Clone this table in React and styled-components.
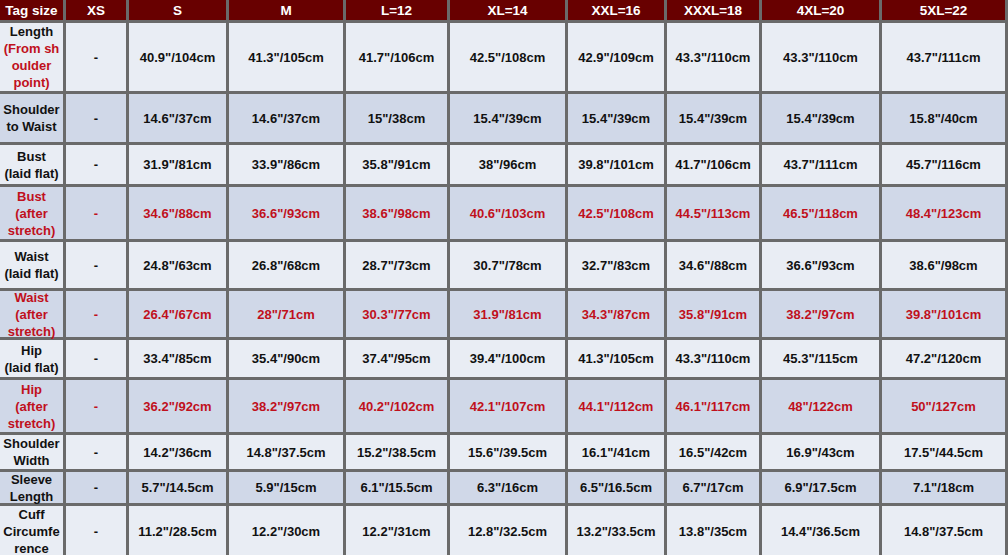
import styled, { createGlobalStyle } from "styled-components";

const GlobalStyle = createGlobalStyle`
  html, body {
    margin: 0;
    padding: 0;
    overflow: hidden;
    background: #ffffff;
  }
`

const columns = [63, 60, 97, 114, 101, 115, 96, 92, 117, 123]
const rowHeights = [20, 68, 48, 39, 52, 46, 46, 37, 52, 34, 31, 50]

const header = ["Tag size", "XS", "S", "M", "L=12", "XL=14", "XXL=16", "XXXL=18", "4XL=20", "5XL=22"]

const rows = [
  {
    label: [["Length", false], ["(From sh", true], ["oulder", true], ["point)", true]],
    values: ['40.9"/104cm', '41.3"/105cm', '41.7"/106cm', '42.5"/108cm', '42.9"/109cm', '43.3"/110cm', '43.3"/110cm', '43.7"/111cm'],
  },
  {
    label: [["Shoulder"], ["to Waist"]],
    values: ['14.6"/37cm', '14.6"/37cm', '15"/38cm', '15.4"/39cm', '15.4"/39cm', '15.4"/39cm', '15.4"/39cm', '15.8"/40cm'],
  },
  {
    label: [["Bust"], ["(laid flat)"]],
    values: ['31.9"/81cm', '33.9"/86cm', '35.8"/91cm', '38"/96cm', '39.8"/101cm', '41.7"/106cm', '43.7"/111cm', '45.7"/116cm'],
  },
  {
    red: true,
    label: [["Bust"], ["(after"], ["stretch)"]],
    values: ['34.6"/88cm', '36.6"/93cm', '38.6"/98cm', '40.6"/103cm', '42.5"/108cm', '44.5"/113cm', '46.5"/118cm', '48.4"/123cm'],
  },
  {
    label: [["Waist"], ["(laid flat)"]],
    values: ['24.8"/63cm', '26.8"/68cm', '28.7"/73cm', '30.7"/78cm', '32.7"/83cm', '34.6"/88cm', '36.6"/93cm', '38.6"/98cm'],
  },
  {
    red: true,
    label: [["Waist"], ["(after"], ["stretch)"]],
    values: ['26.4"/67cm', '28"/71cm', '30.3"/77cm', '31.9"/81cm', '34.3"/87cm', '35.8"/91cm', '38.2"/97cm', '39.8"/101cm'],
  },
  {
    label: [["Hip"], ["(laid flat)"]],
    values: ['33.4"/85cm', '35.4"/90cm', '37.4"/95cm', '39.4"/100cm', '41.3"/105cm', '43.3"/110cm', '45.3"/115cm', '47.2"/120cm'],
  },
  {
    red: true,
    label: [["Hip"], ["(after"], ["stretch)"]],
    values: ['36.2"/92cm', '38.2"/97cm', '40.2"/102cm', '42.1"/107cm', '44.1"/112cm', '46.1"/117cm', '48"/122cm', '50"/127cm'],
  },
  {
    label: [["Shoulder"], ["Width"]],
    values: ['14.2"/36cm', '14.8"/37.5cm', '15.2"/38.5cm', '15.6"/39.5cm', '16.1"/41cm', '16.5"/42cm', '16.9"/43cm', '17.5"/44.5cm'],
  },
  {
    label: [["Sleeve"], ["Length"]],
    values: ['5.7"/14.5cm', '5.9"/15cm', '6.1"/15.5cm', '6.3"/16cm', '6.5"/16.5cm', '6.7"/17cm', '6.9"/17.5cm', '7.1"/18cm'],
  },
  {
    label: [["Cuff"], ["Circumfe"], ["rence"]],
    values: ['11.2"/28.5cm', '12.2"/30cm', '12.2"/31cm', '12.8"/32.5cm', '13.2"/33.5cm', '13.8"/35cm', '14.4"/36.5cm', '14.8"/37.5cm'],
  },
]

const App = () => {
  return (
    <>
      <GlobalStyle />
      <StyledTable>
        {header.map((h) => (
          <StyledHeadCell key={h}>{h}</StyledHeadCell>
        ))}
        {rows.map((row, i) => {
          const alt = i % 2 === 1
          return [
            <StyledLabelCell key={`l${i}`} $alt={alt}>
              {row.label.map(([text, red], j) => (
                <StyledLabelLine key={j} $red={row.red || red}>{text}</StyledLabelLine>
              ))}
            </StyledLabelCell>,
            <StyledDataCell key={`d${i}`} $alt={alt} $red={row.red}>-</StyledDataCell>,
            ...row.values.map((v, j) => (
              <StyledDataCell key={`v${i}-${j}`} $alt={alt} $red={row.red}>{v}</StyledDataCell>
            )),
          ]
        })}
      </StyledTable>
    </>
  )
}
export default App

const StyledTable = styled.div`
  display: grid;
  grid-template-columns: ${columns.map((c) => `${c}px`).join(" ")};
  grid-template-rows: ${rowHeights.map((r) => `${r}px`).join(" ")};
  gap: 3px;
  width: 1005px;
  border-right: 3px solid #6a6a6a;
  background: #6a6a6a;
  font-family: "Liberation Sans", Arial, sans-serif;
  font-weight: bold;
  font-size: 13px;
`
const StyledHeadCell = styled.div`
  display: flex;
  align-items: center;
  justify-content: center;
  background: #680000;
  color: #ffffff;
  font-size: 13.5px;
  white-space: nowrap;
`
const StyledLabelCell = styled.div`
  display: flex;
  flex-direction: column;
  align-items: center;
  justify-content: center;
  background: ${props => props.$alt ? "#d0d8e8" : "#e9edf4"};
  line-height: 17px;
  font-size: 13px;
`
const StyledLabelLine = styled.span`
  color: ${props => props.$red ? "#c0101c" : "#111111"};
  white-space: nowrap;
`
const StyledDataCell = styled.div`
  display: flex;
  align-items: center;
  justify-content: center;
  background: ${props => props.$alt ? "#d0d8e8" : "#e9edf4"};
  color: ${props => props.$red ? "#c0101c" : "#111111"};
  white-space: nowrap;
`
